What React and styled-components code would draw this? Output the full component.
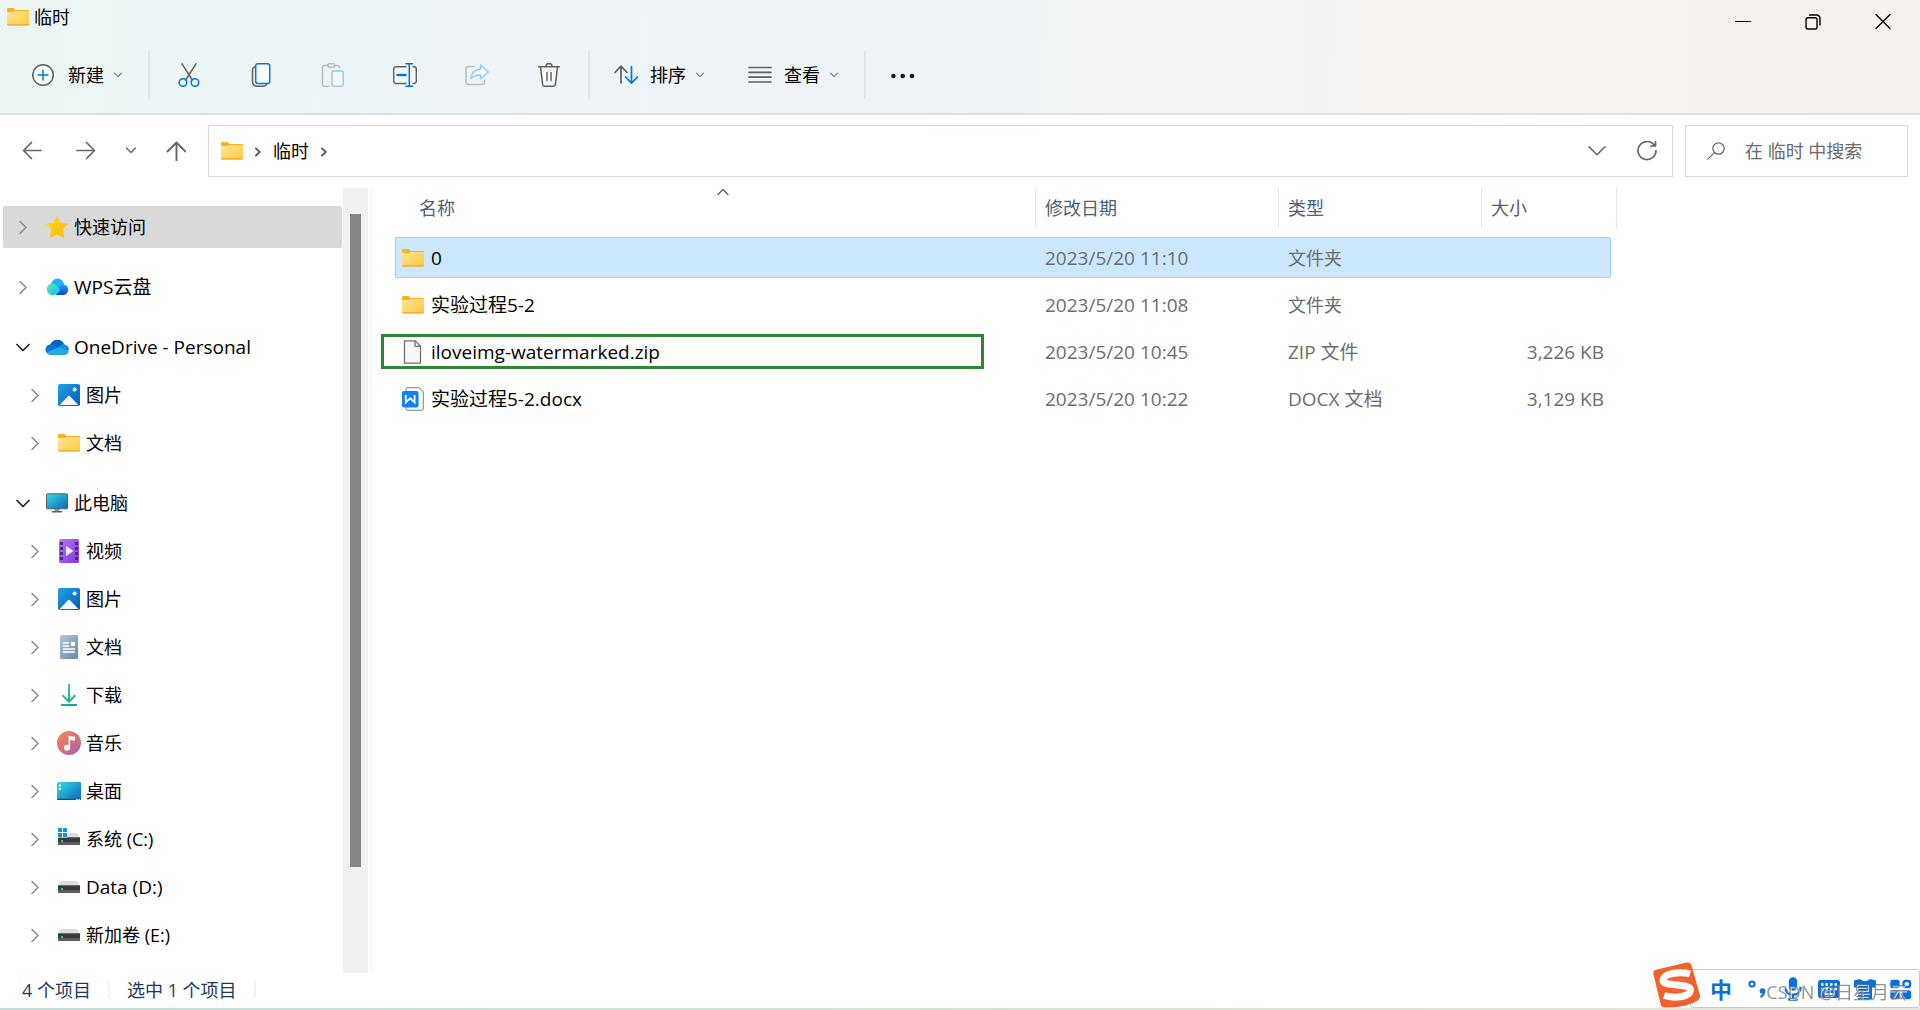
import React, { useState } from 'react'
import styled, { createGlobalStyle } from 'styled-components'

const GlobalStyle = createGlobalStyle`
  * { box-sizing: border-box; }
  body {
    margin: 0;
    background: #fff;
    color: #000;
    font-family: "Open Sans", "Noto Sans CJK SC", sans-serif;
    font-size: 18px;
    line-height: 24px;
  }
  button {
    font: inherit;
    color: inherit;
    background: none;
    border: none;
    padding: 0;
  }
  svg { display: block; flex: none; }
`

const Window = styled.div`
  min-height: 100vh;
  display: flex;
  flex-direction: column;
  background: #fff;
`

const Header = styled.header`
  background: linear-gradient(92deg, #ebf6f4 0%, #edf4f7 22%, #eef3f8 45%, #f2f3f3 60%, #f6f2ef 75%, #f6f1ed 100%);
  border-bottom: 2px solid rgba(0, 0, 0, 0.08);
`

const TitleBar = styled.div`
  display: flex;
  justify-content: space-between;
  height: 43px;
  padding: 0 2px 0 7px;
`

const Title = styled.h1`
  display: flex;
  align-items: center;
  gap: 5px;
  height: 34px;
  margin: 0;
  font-size: 18px;
  font-weight: 400;
`

const WindowButtons = styled.div`
  display: flex;
`

const WindowButton = styled.button`
  display: flex;
  align-items: center;
  justify-content: center;
  width: 70px;
  height: 43px;
`

const Toolbar = styled.div`
  display: flex;
  align-items: center;
  height: 70px;
  padding: 0 0 6px 21px;
`

const TextButton = styled.button`
  display: flex;
  align-items: center;
  height: 48px;
  padding: 0 11px;
  gap: 10px;

  & > span { margin-left: 2px; }
`

const ButtonGroup = styled.div`
  display: flex;
  gap: ${(p) => p.$gap}px;
  padding-left: ${(p) => p.$indent || 0}px;
`

const IconButton = styled.button`
  display: flex;
  align-items: center;
  justify-content: center;
  width: ${(p) => p.$width || 48}px;
  height: 48px;
`

const Divider = styled.div`
  width: 2px;
  height: 48px;
  margin: 0 13px 0 15px;
  background: rgba(0, 0, 0, 0.06);
`

const NavBar = styled.nav`
  display: flex;
  align-items: center;
  padding: 10px 12px 11px 5px;
`

const AddressBox = styled.div`
  flex: 1;
  display: flex;
  align-items: center;
  height: 52px;
  margin: 0 12px 0 5px;
  padding-left: 12px;
  border: 1px solid #d9d9d9;
`

const Crumbs = styled.div`
  flex: 1;
  display: flex;
  align-items: center;
  gap: 12px;
`

const Crumb = styled.a`
  color: #000;
  text-decoration: none;
`

const SearchBox = styled.label`
  display: flex;
  align-items: center;
  gap: 20px;
  width: 223px;
  height: 52px;
  padding-left: 21px;
  border: 1px solid #d9d9d9;
`

const SearchInput = styled.input`
  flex: 1;
  min-width: 0;
  padding: 0;
  border: none;
  outline: none;
  background: none;
  font: inherit;

  &::placeholder { color: #6b6b6b; opacity: 1; }
`

const Body = styled.div`
  flex: 1;
  display: flex;
`

const Sidebar = styled.aside`
  width: 343px;
  padding: 15px 1px 13px 3px;
`

const Tree = styled.ul`
  list-style: none;
  margin: 0 0 12px;
  padding: 0;

  &:last-child { margin-bottom: 0; }
`

const TreeItem = styled.li`
  padding: 3px 0;
`

const TreeRow = styled.div`
  display: flex;
  align-items: center;
  height: 42px;
  padding-left: ${(p) => (p.$child ? 20 : 8)}px;
  border-radius: 2px;
  background: ${(p) => (p.$selected ? '#d9d9d9' : 'none')};
`

const Toggle = styled.button`
  display: flex;
  align-items: center;
  justify-content: center;
  width: 24px;
  height: 24px;
  margin-right: 11px;
`

const TreeLink = styled.a`
  display: flex;
  align-items: center;
  gap: 6px;
  color: #000;
  text-decoration: none;
  font-size: ${(p) => (p.$latin ? 19 : 18)}px;
`

const ScrollTrack = styled.div`
  width: 25px;
  padding: 26px 7px 0;
  background: #f0f0f0;
`

const ScrollThumb = styled.div`
  height: 86%;
  background: #858585;
`

const Content = styled.main`
  flex: 1;
  margin-left: 2px;
  padding-left: 23px;
  border-left: 2px solid #f7f7f7;
`

const FileTable = styled.table`
  width: 1222px;
  table-layout: fixed;
  border-collapse: collapse;
`

const Col = styled.col`
  width: ${(p) => p.$width}px;
`

const HeadCell = styled.th`
  height: 46px;
  padding: 0 0 0 ${(p) => (p.$first ? 15 : 0)}px;
  vertical-align: top;
  font-weight: 400;
  color: #4c607a;
`

const SortButton = styled.button`
  position: relative;
  display: flex;
  align-items: center;
  width: 100%;
  height: 40px;
  padding-left: 9px;
  border-right: 1px solid #e5e5e5;
`

const SortMark = styled.span`
  position: absolute;
  top: 0;
  left: 50%;
  margin-left: -6px;
`

const FileRow = styled.tr`
  cursor: default;
`

const FileTd = styled.td`
  position: relative;
  padding: 3px 0;
`

const Cell = styled.div`
  display: flex;
  align-items: center;
  gap: 7px;
  height: 41px;
  padding: 0 6px 0 ${(p) => (p.$first ? 6 : 9)}px;
  justify-content: ${(p) => (p.$end ? 'flex-end' : 'flex-start')};
  font-size: ${(p) => (p.$latin ? 19 : 18)}px;
  color: ${(p) => (p.$first ? '#000' : '#6d6d6d')};
  border: 1px solid ${(p) => (p.$selected ? '#99d1ff' : 'transparent')};
  border-left-width: ${(p) => (p.$first ? 1 : 0)}px;
  border-right-width: ${(p) => (p.$end ? 1 : 0)}px;
  background: ${(p) => (p.$selected ? '#cce8ff' : 'none')};
  border-radius: ${(p) => (p.$first ? '2px 0 0 2px' : p.$end ? '0 2px 2px 0' : '0')};
`

const Highlight = styled.div`
  position: absolute;
  top: 6px;
  left: -14px;
  right: 52px;
  height: 35px;
  border: 3px solid #318431;
  pointer-events: none;
`

const StatusBar = styled.footer`
  display: flex;
  align-items: center;
  gap: 17px;
  height: 37px;
  padding: 0 0 2px 22px;
  color: #1e395b;
  border-bottom: 2px solid;
  border-image: linear-gradient(90deg, #c5dbd9, #cfe3d5 30%, #d9e2d0 60%, #e9e6df) 1;
`

const StatusDivider = styled.div`
  width: 2px;
  height: 17px;
  background: #f3f3f3;
`

const ImeBar = styled.div`
  position: fixed;
  right: 0;
  bottom: 2px;
  display: flex;
  align-items: center;
  gap: 12px;
  height: 39px;
  padding: 0 6px 0 18px;
  background: #fff;
  border: 1px solid #b8cce2;
  border-radius: 3px;
`

const ImeLogo = styled.div`
  position: absolute;
  left: -38px;
  bottom: -1px;
`

const ImeButton = styled.button`
  display: flex;
  align-items: center;
  justify-content: center;
  width: 24px;
  height: 36px;
  color: #0a6fd8;
  font-size: 22px;
  font-weight: 700;
`

const Watermark = styled.div`
  position: fixed;
  right: 13px;
  bottom: 6px;
  font-size: 18px;
  color: rgba(120, 120, 120, 0.8);
  text-shadow: 1px 1px 0 rgba(255, 255, 255, 0.7);
  pointer-events: none;
`

const GRAY = '#5f5f5f'
const BLUE = '#0078d4'

function Line({ w = 24, h = 24, color = GRAY, width = 1.5, children, ...rest }) {
  return (
    <svg width={w} height={h} viewBox={`0 0 ${w} ${h}`} fill="none" stroke={color} strokeWidth={width} strokeLinecap="round" strokeLinejoin="round" aria-hidden="true" {...rest}>
      {children}
    </svg>
  )
}

const SmallDown = () => (
  <Line w={8} h={6} width={1.1} color="#777"><path d="M.6 1.2 4 4.6l3.400-3.400" /></Line>
)

const CrumbArrow = () => (
  <Line w={6} h={12} width={2} color="#666"><path d="m1 3.400 3.800 3.600L1 10.600" /></Line>
)

const FolderIcon = () => (
  <svg width="22" height="18" viewBox="0 0 22 18" aria-hidden="true">
    <defs>
      <linearGradient id="folder" x1="0" y1="0" x2="1" y2="1">
        <stop offset="0" stopColor="#ffe69d" />
        <stop offset="1" stopColor="#ffc937" />
      </linearGradient>
    </defs>
    <path d="M0 1a1 1 0 0 1 1-1h5.500l2 2H21a1 1 0 0 1 1 1v4H0z" fill="#f9b21b" />
    <path d="M0 4h6.800L8.600 3H22v13.500a1 1 0 0 1-1 1H1a1 1 0 0 1-1-1z" fill="url(#folder)" />
    <path d="M0 16.300h22a1.200 1.200 0 0 1-1 1.200H1a1.200 1.200 0 0 1-1-1.200z" fill="#eba922" />
  </svg>
)

const NewIcon = () => (
  <Line><circle cx="11" cy="12" r="10.300" fill="#fafcfc" /><path d="M11 7v10M6 12h10" stroke={BLUE} /></Line>
)

const CutIcon = () => (
  <Line>
    <path d="M5 .8 15.400 17M19 .8 8.600 17" />
    <g stroke={BLUE}><circle cx="6" cy="19.500" r="3.800" /><circle cx="18" cy="19.500" r="3.800" /></g>
  </Line>
)

const CopyIcon = () => (
  <Line>
    <path d="M5.500 4C4 4.400 3.500 5.500 3.500 7v11.500c0 3 2 4.700 5 4.700h6c1.500 0 2.500-.7 3-1.900" />
    <rect x="6.700" y=".8" width="14" height="19.700" rx="2.200" stroke={BLUE} fill="#fafcfc" />
  </Line>
)

const PasteIcon = () => (
  <Line color="#b9bec0">
    <path d="M7 2.500H3.500a2 2 0 0 0-2 2v16.700a2 2 0 0 0 2 2H8M14 2.500h2.500a2 2 0 0 1 2 2" />
    <rect x="6.500" y=".8" width="7.500" height="3.400" rx="1.700" />
    <rect x="11" y="8" width="11.200" height="15.200" rx="2" stroke="#97c9f0" fill="#f3f9fd" />
  </Line>
)

const RenameIcon = () => (
  <Line>
    <path d="M13 3.800H3a2.300 2.300 0 0 0-2.300 2.300v12A2.300 2.300 0 0 0 3 20.400h10M20 3.800h1a2.300 2.300 0 0 1 2.300 2.300v12a2.300 2.300 0 0 1-2.300 2.300h-1" fill="#fafcfc" />
    <g stroke={BLUE}><path d="M16.300.8v22.400M13 .8h6.600M13 23.200h6.600" /><path d="M4.400 12h8" strokeWidth="2.600" /></g>
  </Line>
)

const ShareIcon = () => (
  <Line color="#b9bec0">
    <path d="M9 3.500H3.500A2.500 2.500 0 0 0 1 6v13a2.500 2.500 0 0 0 2.500 2.500H17a2.500 2.500 0 0 0 2.500-2.500v-2" />
    <path d="m15.500 2 7.700 7-7.700 7v-3.900c-4-.2-7 1-9.800 3.400C6.500 10.300 10 6.600 15.500 6z" stroke="#97c9f0" fill="#f3f9fd" />
  </Line>
)

const TrashIcon = () => (
  <Line>
    <path d="M3.500 4 5.600 21a2.500 2.500 0 0 0 2.400 2.200h8a2.500 2.500 0 0 0 2.400-2.200l2.100-17" fill="#fafcfc" />
    <path d="M1.700 3.800h20.600M9 3.400a3 3 0 0 1 6 0M10 9.500v8M14 9.500v8" />
  </Line>
)

const SortIcon = () => (
  <Line width={1.7}>
    <path d="M7 20V3.500M1 9.500l6-6.300 6 6.300" />
    <path d="M17.500 3.500V20M11.600 14l5.900 6.200 5.900-6.200" stroke={BLUE} />
  </Line>
)

const ViewIcon = () => (
  <Line width={1.7}><path d="M1 4.500h22M1 9.300h22M1 14.200h22M1 19h22" /></Line>
)

const MoreIcon = () => (
  <svg width="24" height="24" viewBox="0 0 24 24" fill="#1a1a1a" aria-hidden="true">
    <circle cx="2.400" cy="13" r="2.300" /><circle cx="11.700" cy="13" r="2.300" /><circle cx="21" cy="13" r="2.300" />
  </svg>
)

const StarIcon = () => (
  <svg width="22" height="22" viewBox="0 0 22 22" aria-hidden="true">
    <defs>
      <linearGradient id="star" x1="0" y1="0" x2="1" y2="1"><stop offset="0" stopColor="#ffdf0a" /><stop offset="1" stopColor="#fdb40f" /></linearGradient>
    </defs>
    <path d="M11 .5 14 7.200l7.500.9-5.500 5.100 1.700 8.300L11 17.900l-6.700 3.600L6 13.200.5 8.100 8 7.200z" fill="url(#star)" stroke="url(#star)" strokeLinejoin="round" />
  </svg>
)

const WpsIcon = () => (
  <svg width="22" height="18" viewBox="0 0 22 18" aria-hidden="true">
    <defs>
      <linearGradient id="wps1" x1="0" y1="0" x2="1" y2="1"><stop offset="0" stopColor="#56f0a4" /><stop offset="1" stopColor="#15b9fb" /></linearGradient>
      <linearGradient id="wps2" x1="0" y1="0" x2="0" y2="1"><stop offset="0" stopColor="#2e9bff" /><stop offset="1" stopColor="#0147d2" /></linearGradient>
    </defs>
    <circle cx="11.500" cy="7" r="6.500" fill="#1fb2ff" />
    <path d="M10 17c2-5 2.500-10.500 7.500-10.500a5.300 5.300 0 0 1 0 10.500z" fill="url(#wps2)" />
    <path d="M6 5.500c4.500 0 5.500 3.500 8 6-1 3.500-3.500 5.500-8 5.500A5.800 5.800 0 0 1 6 5.500z" fill="url(#wps1)" />
  </svg>
)

const OneDriveIcon = () => (
  <svg width="24" height="16" viewBox="0 0 24 16" aria-hidden="true" style={{ margin: '0 -1px' }}>
    <path d="M5 6C6.500 1.500 11 0 14.500 1c2.500.8 4 2.300 4.800 4.400L13 9z" fill="#0364b8" />
    <path d="M5 5.400c3.300-.6 5 1 12 5.600L3 15A5.200 5.200 0 0 1 5 5.400z" fill="#0078d4" />
    <path d="M12.500 8.600c2-2 4.500-3.600 7-3.200 3 .5 4.500 2.700 4.500 5.300L20 13z" fill="#1490df" />
    <path d="M1.500 13.600 13 8.500l10.900 3.400c-.6 2.600-2.500 4.100-4.900 4.100H5.500c-1.700 0-3.200-.9-4-2.400z" fill="#28a8ea" />
  </svg>
)

const PictureIcon = () => (
  <svg width="22" height="22" viewBox="0 0 22 22" aria-hidden="true">
    <defs>
      <linearGradient id="pic" x1="0" y1="0" x2="1" y2="1"><stop offset="0" stopColor="#1fa2e8" /><stop offset="1" stopColor="#0560ad" /></linearGradient>
    </defs>
    <rect width="22" height="22" rx="1.800" fill="url(#pic)" />
    <path d="m1.600 21 8.200-8.600a1.700 1.700 0 0 1 2.400 0l8.200 8.600z" fill="#f1f7fc" />
    <circle cx="16.600" cy="5.600" r="2" fill="#fff" />
  </svg>
)

const PcIcon = () => (
  <svg width="22" height="20" viewBox="0 0 22 20" aria-hidden="true">
    <defs>
      <linearGradient id="pc" x1="0" y1="0" x2="1" y2="1"><stop offset="0" stopColor="#35dbe5" /><stop offset="1" stopColor="#0b67b9" /></linearGradient>
    </defs>
    <path d="M8.500 15h5v3h-5z" fill="#8f969d" />
    <path d="M6 18h10v1.500H6z" fill="#5b636b" />
    <rect x=".5" y=".8" width="21" height="15" rx=".8" fill="url(#pc)" stroke="#50616f" />
  </svg>
)

const VideoIcon = () => (
  <svg width="22" height="24" viewBox="0 0 22 24" aria-hidden="true">
    <defs>
      <linearGradient id="video" x1="0" y1="0" x2="1" y2="1"><stop offset="0" stopColor="#bd72f7" /><stop offset="1" stopColor="#813ae0" /></linearGradient>
    </defs>
    <rect x="1" width="20" height="24" rx="1.500" fill="url(#video)" />
    {[3, 8, 13, 18].map((y) => (
      <g key={y} fill="#4a2a7c"><rect x="2" y={y} width="3" height="3" /><rect x="17" y={y} width="3" height="3" /></g>
    ))}
    <path d="m8 7 7.500 5L8 17z" fill="#f6f0fb" />
  </svg>
)

const DocumentIcon = () => (
  <svg width="22" height="24" viewBox="0 0 22 24" aria-hidden="true">
    <defs>
      <linearGradient id="doc" x1="0" y1="0" x2="1" y2="1"><stop offset="0" stopColor="#b4c6d8" /><stop offset="1" stopColor="#6b87a6" /></linearGradient>
    </defs>
    <rect x="2" width="18" height="24" rx="1.500" fill="url(#doc)" />
    <path d="M5 8h6M5 11h6M5 14h12M5 17h12" stroke="#fff" strokeWidth="1.400" />
    <path d="M13 7h4v4h-4z" fill="#fff" />
  </svg>
)

const DownloadIcon = () => (
  <svg width="22" height="24" viewBox="0 0 22 24" fill="none" aria-hidden="true">
    <defs>
      <linearGradient id="down" gradientUnits="userSpaceOnUse" x1="3" y1="0" x2="19" y2="24"><stop offset="0" stopColor="#4cd681" /><stop offset="1" stopColor="#0a9e9e" /></linearGradient>
    </defs>
    <path d="M11 1v17.500M4.500 12.200 11 18.500l6.500-6.300M3 22h16" stroke="url(#down)" strokeWidth="2" />
  </svg>
)

const MusicIcon = () => (
  <svg width="24" height="24" viewBox="0 0 24 24" aria-hidden="true" style={{ margin: '0 -1px' }}>
    <defs>
      <linearGradient id="music" x1="0" y1="0" x2="1" y2="1"><stop offset="0" stopColor="#f58a56" /><stop offset=".5" stopColor="#d5727a" /><stop offset="1" stopColor="#9a62c0" /></linearGradient>
    </defs>
    <circle cx="12" cy="12" r="12" fill="url(#music)" />
    <circle cx="10" cy="16.800" r="3" fill="#fff" />
    <path d="M11.500 17V4.500c2 1 3.500 1.200 6.500 1v4c-2 .2-3.500 0-5-.7V17z" fill="#fff" />
  </svg>
)

const DesktopIcon = () => (
  <svg width="24" height="18" viewBox="0 0 24 18" aria-hidden="true" style={{ margin: '0 -1px' }}>
    <rect width="24" height="18" rx="1.200" fill="url(#pc)" />
    <path d="M0 16.800h24a1.200 1.200 0 0 1-1.200 1.200H1.200A1.200 1.200 0 0 1 0 16.800z" fill="#0c4f86" />
    <path d="M2 2.500h2v2H2zM2 6h2v2H2zM19 17h1.500v1H19zM21.500 17H23v1h-1.500z" fill="#fff" />
  </svg>
)

const DriveIcon = ({ system }) => (
  <svg width="22" height={system ? 22 : 12} viewBox={system ? '0 -5 22 22' : '0 0 22 12'} aria-hidden="true">
    <path d="M3 0h16l3 5H0z" fill="#dcdde1" />
    <path d="M0 4.500h22V12H0z" fill="#5c5c5c" />
    <path d="M0 4.500h22V9H0z" fill="#3a3a3a" />
    <path d="M3 7h2v2H3z" fill="#2ee62e" />
    {system && (
      <>
        <path d="M0-5h9.500v9.500H0z" fill="#fff" />
        <path d="M0-5h4v4H0zM5-5h4v4H5zM0 0h4v4H0zM5 0h4v4H5z" fill="#1590e0" />
      </>
    )}
  </svg>
)

const ZipIcon = () => (
  <Line w={22} h={24} color="#707070" width={1.3}>
    <path d="M2.500 .8h10.500l5.500 5.500v16.900h-16z" fill="#f9f9f9" strokeLinejoin="miter" /><path d="M13 .8v5.500h5.500" />
  </Line>
)

const DocxIcon = () => (
  <svg width="22" height="24" viewBox="0 0 22 24" aria-hidden="true">
    <path d="M4 2.500A1.800 1.800 0 0 1 5.800.7H17l4.400 4.500v16.300a1.800 1.800 0 0 1-1.800 1.800H5.800A1.800 1.800 0 0 1 4 21.500z" fill="#fafbfc" stroke="#8e9bab" strokeWidth="1.200" />
    <path d="M0 6a2 2 0 0 1 2-2h12.500a2 2 0 0 1 2 2v12.500a2 2 0 0 1-2 2H2a2 2 0 0 1-2-2z" fill="#0f82fb" />
    <path d="M3.800 8v7.500l4.400-4.200 4.400 4.200V8" fill="none" stroke="#fff" strokeWidth="1.800" />
  </svg>
)

const SogouLogo = () => (
  <svg width="48" height="46" viewBox="0 0 48 46" aria-hidden="true">
    <path d="M4 7.500 33.500.6c2.700-.6 4.300.3 5 2.600l8.300 29.500c.8 2.800 0 4.500-2.500 6C34 44.500 23 45.500 12 45.600c-2.500 0-3.700-1-4.300-3.300L.5 12.500C-.1 9.800 1 8.200 4 7.500z" fill="#f2602b" />
    <path d="M37 12c-8-2.500-26-1.500-27 6-.8 7.500 28 2.500 27.500 10C37 35.500 20 36.500 11 33.500" fill="none" stroke="#fff" strokeWidth="7" />
  </svg>
)

const places = [
  { items: [{ name: '快速访问', icon: <StarIcon />, selected: true }] },
  { items: [{ name: 'WPS云盘', icon: <WpsIcon />, latin: true }] },
  {
    items: [
      { name: 'OneDrive - Personal', icon: <OneDriveIcon />, open: true, latin: true },
      { name: '图片', icon: <PictureIcon />, child: true },
      { name: '文档', icon: <FolderIcon />, child: true },
    ],
  },
  {
    items: [
      { name: '此电脑', icon: <PcIcon />, open: true },
      { name: '视频', icon: <VideoIcon />, child: true },
      { name: '图片', icon: <PictureIcon />, child: true },
      { name: '文档', icon: <DocumentIcon />, child: true },
      { name: '下载', icon: <DownloadIcon />, child: true },
      { name: '音乐', icon: <MusicIcon />, child: true },
      { name: '桌面', icon: <DesktopIcon />, child: true },
      { name: '系统 (C:)', icon: <DriveIcon system />, child: true },
      { name: 'Data (D:)', icon: <DriveIcon />, child: true, latin: true },
      { name: '新加卷 (E:)', icon: <DriveIcon />, child: true },
    ],
  },
]

const files = [
  { name: '0', date: '2023/5/20 11:10', type: '文件夹', size: '', icon: <FolderIcon /> },
  { name: '实验过程5-2', date: '2023/5/20 11:08', type: '文件夹', size: '', icon: <FolderIcon /> },
  { name: 'iloveimg-watermarked.zip', date: '2023/5/20 10:45', type: 'ZIP 文件', size: '3,226 KB', icon: <ZipIcon />, mixedType: true, marked: true },
  { name: '实验过程5-2.docx', date: '2023/5/20 10:22', type: 'DOCX 文档', size: '3,129 KB', icon: <DocxIcon />, mixedType: true },
]

function NavTree() {
  return (
    <Sidebar>
      {places.map((group, i) => (
        <Tree key={i}>
          {group.items.map((item) => (
            <TreeItem key={item.name}>
              <TreeRow $child={item.child} $selected={item.selected}>
                <Toggle aria-label={item.open ? '折叠' : '展开'}>
                  {item.open ? (
                    <Line w={14} h={14} color="#222" width={1.7}><path d="m1 4.500 6 6 6-6" /></Line>
                  ) : (
                    <Line w={14} h={14} color="#8a8a8a"><path d="m4 1.500 6 6-6 6" /></Line>
                  )}
                </Toggle>
                <TreeLink href="#" $latin={item.latin}>
                  {item.icon}
                  {item.name}
                </TreeLink>
              </TreeRow>
            </TreeItem>
          ))}
        </Tree>
      ))}
    </Sidebar>
  )
}

function FileList({ selected, onSelect }) {
  return (
    <FileTable>
      <colgroup>
        <Col $width={641} />
        <Col $width={243} />
        <Col $width={203} />
        <Col $width={129} />
        <Col $width={6} />
      </colgroup>
      <thead>
        <tr>
          <HeadCell $first>
            <SortButton>
              名称
              <SortMark><Line w={12} h={8} width={1.2} color="#555"><path d="m1 6.500 5-5 5 5" /></Line></SortMark>
            </SortButton>
          </HeadCell>
          <HeadCell><SortButton>修改日期</SortButton></HeadCell>
          <HeadCell><SortButton>类型</SortButton></HeadCell>
          <HeadCell colSpan={2}><SortButton>大小</SortButton></HeadCell>
        </tr>
      </thead>
      <tbody>
        {files.map((file) => {
          const on = file.name === selected
          return (
            <FileRow key={file.name} onClick={() => onSelect(file.name)}>
              <FileTd>
                <Cell $first $selected={on} $latin>{file.icon}{file.name}</Cell>
                {file.marked && <Highlight />}
              </FileTd>
              <FileTd><Cell $selected={on} $latin>{file.date}</Cell></FileTd>
              <FileTd><Cell $selected={on} $latin={file.mixedType}>{file.type}</Cell></FileTd>
              <FileTd><Cell $selected={on} $end $latin>{file.size}</Cell></FileTd>
              <td />
            </FileRow>
          )
        })}
      </tbody>
    </FileTable>
  )
}

function Ime() {
  return (
    <ImeBar>
      <ImeLogo><SogouLogo /></ImeLogo>
      <ImeButton>中</ImeButton>
      <ImeButton aria-label="标点">
        <Line color="currentColor" width={2}><circle cx="7" cy="7" r="2.600" /><circle cx="17.500" cy="14" r="2.800" fill="currentColor" stroke="none" /><path d="M19.200 14c0 3-1 4.500-3 5.500" /></Line>
      </ImeButton>
      <ImeButton aria-label="语音">
        <Line color="currentColor" width={2.4}><rect x="9" y="1.500" width="6" height="11" rx="3" fill="currentColor" /><path d="M4.500 11c0 9 15 9 15 0M12 18v4.500M8 22.500h8" /></Line>
      </ImeButton>
      <ImeButton aria-label="键盘">
        <svg width="24" height="24" viewBox="0 0 24 24" aria-hidden="true">
          <rect x="1" y="3" width="22" height="18" rx="2.500" fill="currentColor" />
          <path d="M4 7.500h16M4 12h16" stroke="#fff" strokeWidth="2.500" strokeDasharray="2.500 2" /><path d="M7 17h10" stroke="#fff" strokeWidth="2" />
        </svg>
      </ImeButton>
      <ImeButton aria-label="皮肤">
        <svg width="24" height="24" viewBox="0 0 24 24" aria-hidden="true">
          <path d="M7 2c2 2.500 8 2.500 10 0l6 1.500v7h-4V22.500H5V10.500H1v-7z" fill="currentColor" />
        </svg>
      </ImeButton>
      <ImeButton aria-label="工具箱">
        <Line color="currentColor" width={2.4}>
          <rect x="2.500" y="4" width="7" height="6" rx="1" fill="currentColor" /><rect x="14.500" y="4" width="6.500" height="6" rx="2" />
          <rect x="2.500" y="14.500" width="7" height="6.500" rx="1" fill="currentColor" /><rect x="14.500" y="14.500" width="6.500" height="6.500" rx="1" fill="currentColor" />
        </Line>
      </ImeButton>
    </ImeBar>
  )
}

function App() {
  const [selected, setSelected] = useState('0')

  return (
    <Window>
      <GlobalStyle />
      <Header>
        <TitleBar>
          <Title><FolderIcon />临时</Title>
          <WindowButtons>
            <WindowButton aria-label="最小化"><Line w={16} h={16} color="#000" width={1}><path d="M.5 7.500h15" /></Line></WindowButton>
            <WindowButton aria-label="向下还原">
              <Line w={16} h={16} color="#000" width={1.4}><rect x="1" y="3.800" width="11" height="11.200" rx="1.800" /><path d="M4.500 1h7A3.500 3.500 0 0 1 15 4.500V11" /></Line>
            </WindowButton>
            <WindowButton aria-label="关闭"><Line w={16} h={16} color="#000" width={1.3}><path d="m1 .5 14 14M15 .5 1 14.500" /></Line></WindowButton>
          </WindowButtons>
        </TitleBar>
        <Toolbar>
          <TextButton><NewIcon /><span>新建</span><SmallDown /></TextButton>
          <Divider />
          <ButtonGroup $gap={24} $indent={2}>
            <IconButton aria-label="剪切"><CutIcon /></IconButton>
            <IconButton aria-label="复制"><CopyIcon /></IconButton>
            <IconButton aria-label="粘贴"><PasteIcon /></IconButton>
            <IconButton aria-label="重命名"><RenameIcon /></IconButton>
            <IconButton aria-label="共享"><ShareIcon /></IconButton>
            <IconButton aria-label="删除"><TrashIcon /></IconButton>
          </ButtonGroup>
          <Divider />
          <ButtonGroup $gap={22}>
            <TextButton><SortIcon /><span>排序</span><SmallDown /></TextButton>
            <TextButton><ViewIcon /><span>查看</span><SmallDown /></TextButton>
          </ButtonGroup>
          <Divider />
          <IconButton aria-label="更多"><MoreIcon /></IconButton>
        </Toolbar>
      </Header>

      <NavBar>
        <IconButton $width={54} aria-label="后退"><Line w={20} h={20} width={1.7} color="#666"><path d="M19 9.500H1.500M9.500 1.500l-8 8 8 8" /></Line></IconButton>
        <IconButton $width={54} aria-label="前进"><Line w={20} h={20} width={1.7} color="#666"><path d="M1 9.500h17.500M10.500 1.500l8 8-8 8" /></Line></IconButton>
        <IconButton $width={36} aria-label="最近"><Line w={10} h={8} width={1.4} color="#666"><path d="m.5 1 4.500 4.500L9.500 1" /></Line></IconButton>
        <IconButton $width={54} aria-label="向上"><Line w={20} h={20} width={1.9} color="#666"><path d="M10.500 19.500V1.500M1.500 10.500l9-9 9 9" /></Line></IconButton>
        <AddressBox>
          <Crumbs>
            <FolderIcon />
            <CrumbArrow />
            <Crumb href="#">临时</Crumb>
            <CrumbArrow />
          </Crumbs>
          <IconButton $width={50} aria-label="历史记录"><Line w={18} h={10} width={1.6} color="#666"><path d="m1 .8 8 8 8-8" /></Line></IconButton>
          <IconButton $width={50} aria-label="刷新">
            <Line w={20} h={20} width={1.7} color="#666"><path d="M19 9.500a9 9 0 1 1-2.600-6.300L18.500 5M18.500.8V5h-4.700" /></Line>
          </IconButton>
        </AddressBox>
        <SearchBox>
          <Line w={18} h={18} width={1.2} color="#666"><circle cx="11.500" cy="6.500" r="5.700" /><path d="M7.300 10.700 .8 17.200" /></Line>
          <SearchInput type="text" aria-label="搜索" placeholder="在 临时 中搜索" />
        </SearchBox>
      </NavBar>

      <Body>
        <NavTree />
        <ScrollTrack><ScrollThumb /></ScrollTrack>
        <Content>
          <FileList selected={selected} onSelect={setSelected} />
        </Content>
      </Body>

      <StatusBar>
        <span>4 个项目</span>
        <StatusDivider />
        <span>选中 1 个项目</span>
        <StatusDivider />
      </StatusBar>

      <Ime />
      <Watermark>CSDN @日星月云</Watermark>
    </Window>
  )
}

export default App
